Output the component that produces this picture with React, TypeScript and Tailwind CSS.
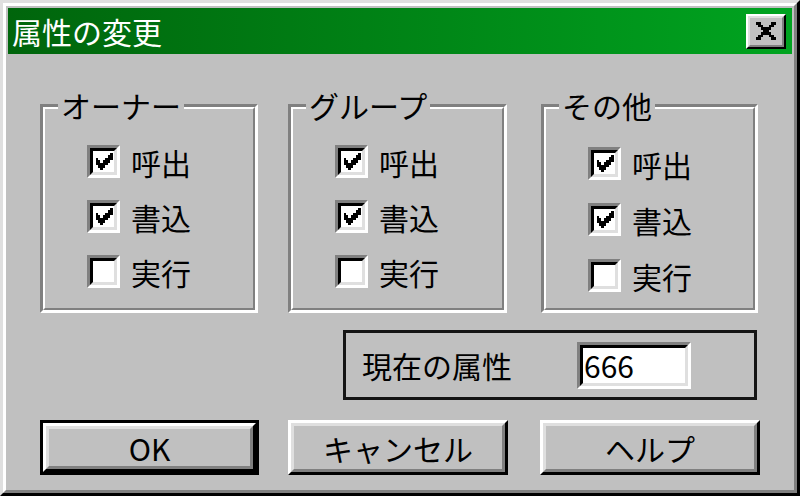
import React from 'react';

// Win95-style "change attributes" dialog, drawn at roughly 2.5x scale

function CheckMark() {
  // 7x7 pixel check, scaled up
  const px: [number, number][] = [
    [6, 0],
    [5, 1], [6, 1],
    [0, 2], [4, 2], [5, 2], [6, 2],
    [0, 3], [1, 3], [3, 3], [4, 3], [5, 3],
    [0, 4], [1, 4], [2, 4], [3, 4], [4, 4],
    [1, 5], [2, 5], [3, 5],
    [2, 6],
  ];
  return (
    <svg width="18" height="17" viewBox="0 0 7 7" shapeRendering="crispEdges">
      {px.map(([x, y]) => (
        <rect key={`${x}-${y}`} x={x} y={y} width="1" height="1" fill="#000" />
      ))}
    </svg>
  );
}

function CloseGlyph() {
  const px: [number, number][] = [
    [0, 0], [1, 0], [6, 0], [7, 0],
    [1, 1], [2, 1], [5, 1], [6, 1],
    [2, 2], [3, 2], [4, 2], [5, 2],
    [3, 3], [4, 3],
    [2, 4], [3, 4], [4, 4], [5, 4],
    [1, 5], [2, 5], [5, 5], [6, 5],
    [0, 6], [1, 6], [6, 6], [7, 6],
  ];
  return (
    <svg width="22" height="18" viewBox="0 0 8 7" shapeRendering="crispEdges">
      {px.map(([x, y]) => (
        <rect key={`${x}-${y}`} x={x} y={y} width="1" height="1" fill="#000" />
      ))}
    </svg>
  );
}

function CheckBox({ label, checked }: { label: string; checked: boolean }) {
  return (
    <div className="flex items-center gap-[11px]">
      <div className="w-[33px] h-[33px] border-[3px] border-t-[#808080] border-l-[#808080] border-r-white border-b-white">
        <div className="w-full h-full border-[3px] border-t-black border-l-black border-r-[#dfdfdf] border-b-[#dfdfdf] bg-white flex items-center justify-center">
          {checked && <CheckMark />}
        </div>
      </div>
      <span className="text-[30px] leading-none">{label}</span>
    </div>
  );
}

function Group({ title, className, rowsClass }: { title: string; className: string; rowsClass: string }) {
  return (
    <div className={`relative h-[209px] border-[3px] border-t-[#808080] border-l-[#808080] border-r-white border-b-white ${className}`}>
      <div className="h-full border-2 border-t-white border-l-white border-r-[#808080] border-b-[#808080]">
        <div className={`flex flex-col pl-[42px] ${rowsClass}`}>
          <CheckBox label="呼出" checked />
          <CheckBox label="書込" checked />
          <CheckBox label="実行" checked={false} />
        </div>
      </div>
      <span className="absolute left-[15px] top-[-20px] px-[3px] bg-[#c0c0c0] text-[30px] leading-[36px]">
        {title}
      </span>
    </div>
  );
}

function Button({ label, isDefault, className }: { label: string; isDefault?: boolean; className: string }) {
  const face = (
    <div className="h-full border-[3px] border-t-white border-l-white border-r-black border-b-black">
      <div className="h-full border-[3px] border-t-[#dfdfdf] border-l-[#dfdfdf] border-r-[#808080] border-b-[#808080] flex items-center justify-center text-[30px] leading-none">
        {label}
      </div>
    </div>
  );
  return (
    <div className={`h-[55px] ${isDefault ? 'border-[3px] border-black' : ''} ${className}`}>
      {face}
    </div>
  );
}

export default function App() {
  return (
    <div className="w-[800px] h-[496px] bg-[#c0c0c0] text-black font-['Noto_Sans_CJK_JP','Noto_Sans',sans-serif] border-[3px] border-t-[#dfdfdf] border-l-[#dfdfdf] border-r-black border-b-black">
      <div className="h-full border-[3px] border-t-white border-l-white border-r-[#808080] border-b-[#808080] p-[2px] flex flex-col">
        {/* Title bar */}
        <div className="h-[46px] bg-linear-to-r from-[#00650c] to-[#00a420] flex items-center justify-between">
          <span className="pl-[4px] text-white text-[30px] leading-none">属性の変更</span>
          <div className="mr-[6px] w-[40px] h-[35px] border-2 border-t-white border-l-white border-r-black border-b-black">
            <div className="h-full border-2 border-t-[#dfdfdf] border-l-[#dfdfdf] border-r-[#808080] border-b-[#808080] bg-[#c0c0c0] flex items-center justify-center">
              <CloseGlyph />
            </div>
          </div>
        </div>

        {/* Body */}
        <div className="flex flex-col px-[32px] pt-[50px]">
          <div className="flex">
            <Group title="オーナー" className="w-[218px]" rowsClass="pt-[36px] gap-[22px]" />
            <Group title="グループ" className="w-[219px] ml-[30px]" rowsClass="pt-[36px] gap-[22px]" />
            <Group title="その他" className="w-[217px] ml-[34px]" rowsClass="pt-[38px] gap-[23px]" />
          </div>

          <div className="self-end mr-[3px] mt-[17px] w-[414px] h-[70px] border-[3px] border-[#141414] flex items-center pl-[16px]">
            <span className="text-[30px] leading-none">現在の属性</span>
            <div className="ml-auto mr-[63px] w-[114px] h-[47px] border-[3px] border-t-[#808080] border-l-[#808080] border-r-white border-b-white">
              <div className="h-full border-[3px] border-t-black border-l-black border-r-[#dfdfdf] border-b-[#dfdfdf] bg-white flex items-center pl-[1px] text-[30px] leading-none">
                666
              </div>
            </div>
          </div>

          <div className="flex mt-[20px]">
            <Button label="OK" isDefault className="w-[219px]" />
            <Button label="キャンセル" className="w-[220px] ml-[29px]" />
            <Button label="ヘルプ" className="w-[220px] ml-[32px]" />
          </div>
        </div>
      </div>
    </div>
  );
}
